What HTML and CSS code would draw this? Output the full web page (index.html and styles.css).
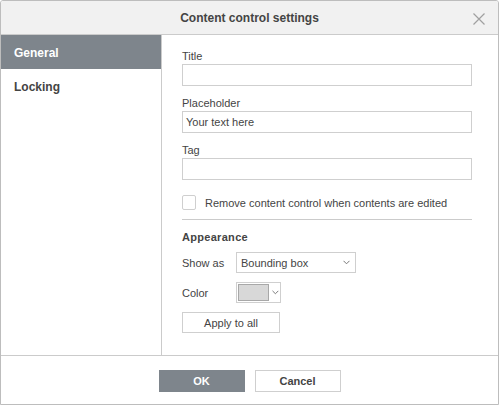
FILE: index.html
```html
<!DOCTYPE html>
<html>
<head>
<meta charset="utf-8">
<link rel="stylesheet" href="styles.css">
</head>
<body>
<div class="dialog">
  <div class="header">
    <div class="title">Content control settings</div>
    <svg class="close" width="12" height="12" viewBox="0 0 12 12"><path d="M0.5 0.5L11.5 11.5M11.5 0.5L0.5 11.5" stroke="#a0a0a0" stroke-width="1.2" fill="none"/></svg>
  </div>
  <div class="main">
    <div class="sidebar">
      <div class="tab active">General</div>
      <div class="tab">Locking</div>
    </div>
    <div class="content">
      <div class="label">Title</div>
      <div class="input"></div>
      <div class="label gap">Placeholder</div>
      <div class="input">Your text here</div>
      <div class="label gap">Tag</div>
      <div class="input"></div>
      <div class="check-row">
        <span class="checkbox"></span>
        <span class="check-text">Remove content control when contents are edited</span>
      </div>
      <div class="sep"></div>
      <div class="section">Appearance</div>
      <div class="row">
        <span class="row-label">Show as</span>
        <div class="select">
          <span>Bounding box</span>
          <svg width="7" height="5" viewBox="0 0 7 5"><path d="M0.5 0.8L3.5 3.8L6.5 0.8" stroke="#777" stroke-width="1" fill="none"/></svg>
        </div>
      </div>
      <div class="row row2">
        <span class="row-label">Color</span>
        <div class="color-btn">
          <span class="swatch"></span>
          <svg width="7" height="5" viewBox="0 0 7 5"><path d="M0.5 0.8L3.5 3.8L6.5 0.8" stroke="#777" stroke-width="1" fill="none"/></svg>
        </div>
      </div>
      <div class="apply">Apply to all</div>
    </div>
  </div>
  <div class="footer">
    <div class="btn primary">OK</div>
    <div class="btn">Cancel</div>
  </div>
</div>
</body>
</html>
```
FILE: styles.css
```css
* { box-sizing: border-box; }
html, body { margin: 0; padding: 0; background: #fff; }
body { font-family: "Liberation Sans", Arial, sans-serif; font-size: 11px; color: #444; }
.dialog {
  width: 499px; height: 405px;
  border: 1px solid #bdbdbd;
  border-radius: 3px 3px 0 0;
  display: flex; flex-direction: column;
  overflow: hidden;
}
.header {
  height: 34px; flex: none;
  background: #f1f1f1;
  border-bottom: 1px solid #cbcbcb;
  display: flex; align-items: center; justify-content: center;
  position: relative;
}
.title { font-weight: bold; font-size: 12px; color: #444; }
.close { position: absolute; right: 13px; top: 12px; }
.main { flex: 1; display: flex; min-height: 0; }
.sidebar { width: 161px; flex: none; border-right: 1px solid #cbcbcb; }
.tab {
  height: 34px; padding-left: 13px; padding-top: 2px;
  display: flex; align-items: center;
  font-weight: bold; font-size: 12px; color: #444;
}
.tab.active { background: #7e858c; color: #fff; }
.content { flex: 1; padding: 14px 26px 0 20px; display: flex; flex-direction: column; align-items: flex-start; }
.label { height: 15px; line-height: 15px; }
.label.gap { margin-top: 10px; }
.input {
  align-self: stretch;
  height: 22px; border: 1px solid #cfcfcf;
  padding: 0 3px; line-height: 20px; font-size: 11px; color: #444;
}
.check-row { margin-top: 15px; display: flex; align-items: center; height: 15px; }
.checkbox { width: 14px; height: 15px; border: 1px solid #cfcfcf; background: #fff; border-radius: 2px; }
.check-text { margin-left: 9px; }
.sep { align-self: stretch; height: 1px; background: #cbcbcb; margin-top: 9px; }
.section { font-weight: bold; margin-top: 10px; height: 15px; line-height: 15px; letter-spacing: 0.3px; }
.row { display: flex; align-items: center; margin-top: 7px; height: 21px; }
.row2 { margin-top: 9px; }
.row-label { width: 54px; }
.select {
  width: 120px; height: 21px; border: 1px solid #cfcfcf;
  display: flex; align-items: center; justify-content: space-between;
  padding: 0 5px 0 4px;
}
.color-btn {
  width: 45px; height: 21px; border: 1px solid #cfcfcf;
  display: flex; align-items: center; padding: 1px; gap: 3px;
}
.swatch { width: 32px; height: 17px; background: #d8d8d8; border: 1px solid #a8a8a8; }
.apply {
  margin-top: 9px; width: 98px; height: 21px;
  border: 1px solid #cfcfcf;
  display: flex; align-items: center; justify-content: center;
}
.footer {
  height: 49px; flex: none; border-top: 1px solid #cbcbcb;
  display: flex; justify-content: center; align-items: flex-start;
  padding-top: 14px; gap: 10px;
}
.btn {
  width: 86px; height: 22px; border: 1px solid #cfcfcf;
  display: flex; align-items: center; justify-content: center;
  font-weight: bold; color: #444; background: #fff;
}
.btn.primary { background: #7e858c; border-color: #7e858c; color: #fff; }
```
